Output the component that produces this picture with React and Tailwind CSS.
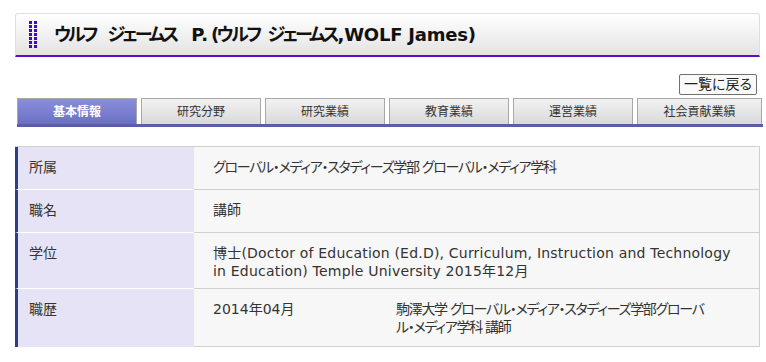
import React from "react";

const FONT = "font-['DejaVu_Sans','Noto_Sans_CJK_JP',sans-serif]";

const tabs = ["基本情報", "研究分野", "研究業績", "教育業績", "運営業績", "社会貢献業績"];

// タイトル左のドット
const Dots = () => (
  <svg width="8" height="27" viewBox="0 0 8 27" className="shrink-0">
    {[0, 1, 2, 3, 4, 5, 6].map((r) => (
      <g key={r} fill="#3a0ad0">
        <rect x="0" y={r * 4} width="3" height="3" />
        <rect x="5" y={r * 4} width="3" height="3" />
      </g>
    ))}
  </svg>
);

const Row = ({ label, children, last, className = "" }) => (
  <div className="flex">
    <div
      className={`w-[179px] shrink-0 bg-[#e5e3f5] border-l-[3px] border-l-[#2b3f8a] pl-[11px] pt-[11px] leading-[18px] ${
        last ? "" : "border-b border-b-white"
      }`}
    >
      {label}
    </div>
    <div
      className={`flex-1 min-h-[43px] bg-[#f7f7f7] border-r border-r-[#d0d0d0] border-b border-b-[#d0d0d0] pl-[19px] pr-[20px] pt-[11px] pb-[8px] leading-[18px] ${className}`}
    >
      {children}
    </div>
  </div>
);

export default function App() {
  return (
    <div className={`w-[766px] h-[362px] overflow-hidden bg-white text-[#333] ${FONT} [font-feature-settings:'palt']`}>
      {/* タイトル */}
      <div className="pt-[13px] pl-[15px]">
        <div className="w-[745px] h-[44px] flex items-center border border-[#dedede] border-b-2 border-b-[#5a0fc8] rounded-t-[3px] bg-gradient-to-b from-white to-[#e3e3e3]">
          <div className="ml-[13px]">
            <Dots />
          </div>
          <h1 className="ml-[17px] flex items-baseline text-[18px] font-bold text-[#111] whitespace-nowrap">
            <span className="tracking-[-3px]">ウルフ</span>
            <span className="ml-[12px] tracking-[-3px]">ジェームス</span>
            <span className="ml-[15px]">P.</span>
            <span className="ml-[3px] tracking-[-2.5px]">(ウルフ</span>
            <span className="ml-[8px] tracking-[-3px]">ジェームス</span>
            <span className="ml-[1px] tracking-[-0.2px]">,WOLF James)</span>
          </h1>
        </div>
      </div>

      {/* 戻るボタン */}
      <div className="flex justify-end pr-[9px] mt-[17px]">
        <button className="h-[21px] px-[4px] border border-[#707070] rounded-[2px] bg-[#fafafa] text-[14px] leading-[19px] text-[#222]">
          一覧に戻る
        </button>
      </div>

      {/* タブ */}
      <div className="ml-[17px] w-[746px] mt-[3px]">
        <div className="flex gap-[4px]">
          {tabs.map((t, i) => (
            <div
              key={t}
              className={`h-[26px] flex items-center justify-center border border-b-0 border-[#a8a8a8] text-[12px] ${
                i === 5 ? "w-[125px]" : "w-[120px]"
              } ${
                i === 0
                  ? "bg-gradient-to-b from-[#8a8fdc] to-[#6b6fc2] text-white font-bold"
                  : "bg-gradient-to-b from-[#f2f2f2] to-[#d9d9d9] text-[#333]"
              }`}
            >
              {t}
            </div>
          ))}
        </div>
        <div className="h-[3px] bg-[#5b5ea6]" />
      </div>

      {/* 基本情報テーブル */}
      <div className="ml-[15px] w-[745px] mt-[19px] border-t border-t-[#d0d0d0] text-[14px]">
        <Row label="所属" className="tracking-[-1.3px]">
          グローバル・メディア・スタディーズ学部 グローバル・メディア学科
        </Row>
        <Row label="職名">講師</Row>
        <Row label="学位" className="tracking-[0.2px]">
          博士(Doctor of Education (Ed.D), Curriculum, Instruction and Technology in Education) Temple University 2015年12月
        </Row>
        <Row label="職歴" last>
          <div className="flex pb-[2px]">
            <div className="w-[183px] shrink-0">2014年04月</div>
            <div className="w-[316px] tracking-[-1.3px]">駒澤大学 グローバル・メディア・スタディーズ学部グローバル・メディア学科 講師</div>
          </div>
        </Row>
      </div>
    </div>
  );
}
